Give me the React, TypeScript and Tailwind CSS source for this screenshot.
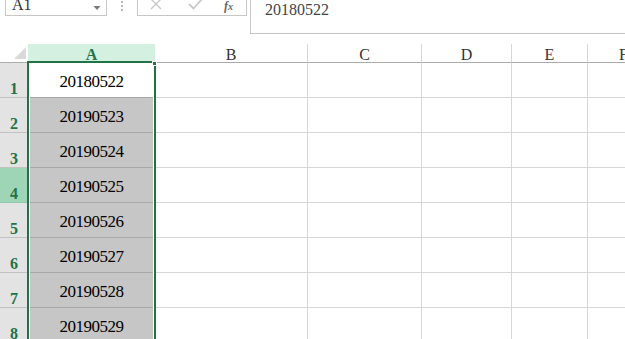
import React from "react";

const serif = { fontFamily: '"Liberation Serif", "Times New Roman", serif' };

const values = [
  "20180522",
  "20190523",
  "20190524",
  "20190525",
  "20190526",
  "20190527",
  "20190528",
  "20190529",
];

function Row({ n, v }: { n: number; v: string }) {
  const active = n === 1;
  const hl = n === 4;
  return (
    <div className="flex h-[35px] shrink-0">
      <div
        className={`w-[28px] shrink-0 border-b flex items-end justify-center pb-[1px] ${
          hl ? "bg-[#9fd5b7] border-[#8fc7a6]" : "bg-[#e3e3e3] border-[#c2c2c2]"
        }`}
      >
        <span className="text-[16px] font-bold leading-[15px] text-[#217346]" style={serif}>
          {n}
        </span>
      </div>
      <div className="w-[127px] shrink-0 pl-[2px] pr-[2px] bg-white">
        <div
          className={`h-full border-b flex items-center justify-center pt-[2px] ${
            active ? "bg-white border-[#a8a8a8]" : "bg-[#c6c6c6] border-[#a8a8a8]"
          }`}
        >
          <span className="text-[17px] leading-none tracking-[-0.5px] text-black" style={serif}>
            {v}
          </span>
        </div>
      </div>
      <div className="w-[153px] shrink-0 border-r border-b border-[#d6d6d6]" />
      <div className="w-[114px] shrink-0 border-r border-b border-[#d6d6d6]" />
      <div className="w-[90px] shrink-0 border-r border-b border-[#d6d6d6]" />
      <div className="w-[76px] shrink-0 border-r border-b border-[#d6d6d6]" />
      <div className="flex-1 border-b border-[#d6d6d6]" />
    </div>
  );
}

export default function App() {
  return (
    <div className="w-[625px] h-[339px] overflow-hidden bg-white relative flex flex-col">
      {/* Formula bar */}
      <div className="h-[44px] shrink-0 flex flex-col">
        <div className="flex items-start -mt-[8px]">
          <div className="w-[5px] shrink-0" />
          <div className="w-[102px] h-[24px] shrink-0 border border-[#c6c6c6] flex items-start justify-between pl-[6px] pr-[5px] pt-[4px]">
            <span className="text-[16px] leading-none text-[#333]" style={serif}>
              A1
            </span>
            <svg width="8" height="14" viewBox="0 0 8 14" className="mt-[4px]">
              <path d="M0.5 5 L7.5 5 L4 9 Z" fill="#7a7a7a" />
            </svg>
          </div>
          <div className="ml-[14px] w-[2px] shrink-0 flex flex-col gap-[2px] pt-[9px]">
            <div className="w-[2px] h-[2px] bg-[#b8b8b8]" />
            <div className="w-[2px] h-[2px] bg-[#b8b8b8]" />
            <div className="w-[2px] h-[2px] bg-[#b8b8b8]" />
          </div>
          <div className="ml-[14px] w-[110px] h-[24px] shrink-0 border border-[#c6c6c6] flex items-center">
            <svg width="12" height="12" viewBox="0 0 12 12" className="ml-[12px] -mt-[1px]">
              <path d="M1 1 L11 11 M11 1 L1 11" stroke="#c8c8c8" strokeWidth="1.4" fill="none" />
            </svg>
            <svg width="15" height="12" viewBox="0 0 15 12" className="ml-[26px] -mt-[1px]">
              <path d="M1 6 L5.5 10.5 L14 1" stroke="#c8c8c8" strokeWidth="1.8" fill="none" />
            </svg>
            <span
              className="ml-[21px] mt-[3px] text-[12px] italic font-bold leading-none text-[#666]"
              style={serif}
            >
              f<span className="text-[10px]">x</span>
            </span>
          </div>
          <div className="ml-[3px] flex-1 h-[42px] border-l border-t border-b border-[#c6c6c6] pl-[14px] pt-[4px]">
            <span className="text-[16px] leading-none text-[#444]" style={serif}>
              20180522
            </span>
          </div>
        </div>
      </div>

      {/* Column header row */}
      <div className="flex h-[19px] shrink-0">
        <div className="w-[28px] shrink-0 bg-white border-b border-[#ababab] flex items-end justify-end pr-[2px] pb-[3px]">
          <svg width="12" height="12" viewBox="0 0 12 12">
            <path d="M12 0 L12 12 L0 12 Z" fill="#dadada" />
          </svg>
        </div>
        <div className="w-[127px] shrink-0 bg-[#d3f0e0] border-b border-[#ababab] flex items-center justify-center pt-[3px]">
          <span className="text-[16px] font-bold leading-none text-[#217346]" style={serif}>
            A
          </span>
        </div>
        {[
          ["B", "w-[153px]"],
          ["C", "w-[114px]"],
          ["D", "w-[90px]"],
          ["E", "w-[76px]"],
        ].map(([l, w]) => (
          <div
            key={l}
            className={`${w} shrink-0 border-r border-b border-r-[#d6d6d6] border-b-[#ababab] flex items-center justify-center pt-[3px]`}
          >
            <span className="text-[16px] leading-none text-[#333]" style={serif}>
              {l}
            </span>
          </div>
        ))}
        <div className="flex-1 border-b border-[#ababab] flex items-center justify-start pl-[31px] pt-[3px]">
          <span className="text-[16px] leading-none text-[#333]" style={serif}>
            F
          </span>
        </div>
      </div>

      {/* Rows */}
      <div className="flex flex-col">
        {values.map((v, i) => (
          <Row key={i} n={i + 1} v={v} />
        ))}
      </div>

      {/* Selection overlay */}
      <div className="absolute left-[27px] top-[61px] w-[129px] h-[300px] border-2 border-[#217346] pointer-events-none" />
      <div className="absolute left-[152px] top-[61px] w-[5px] h-[5px] bg-[#217346] border border-white" />
    </div>
  );
}
